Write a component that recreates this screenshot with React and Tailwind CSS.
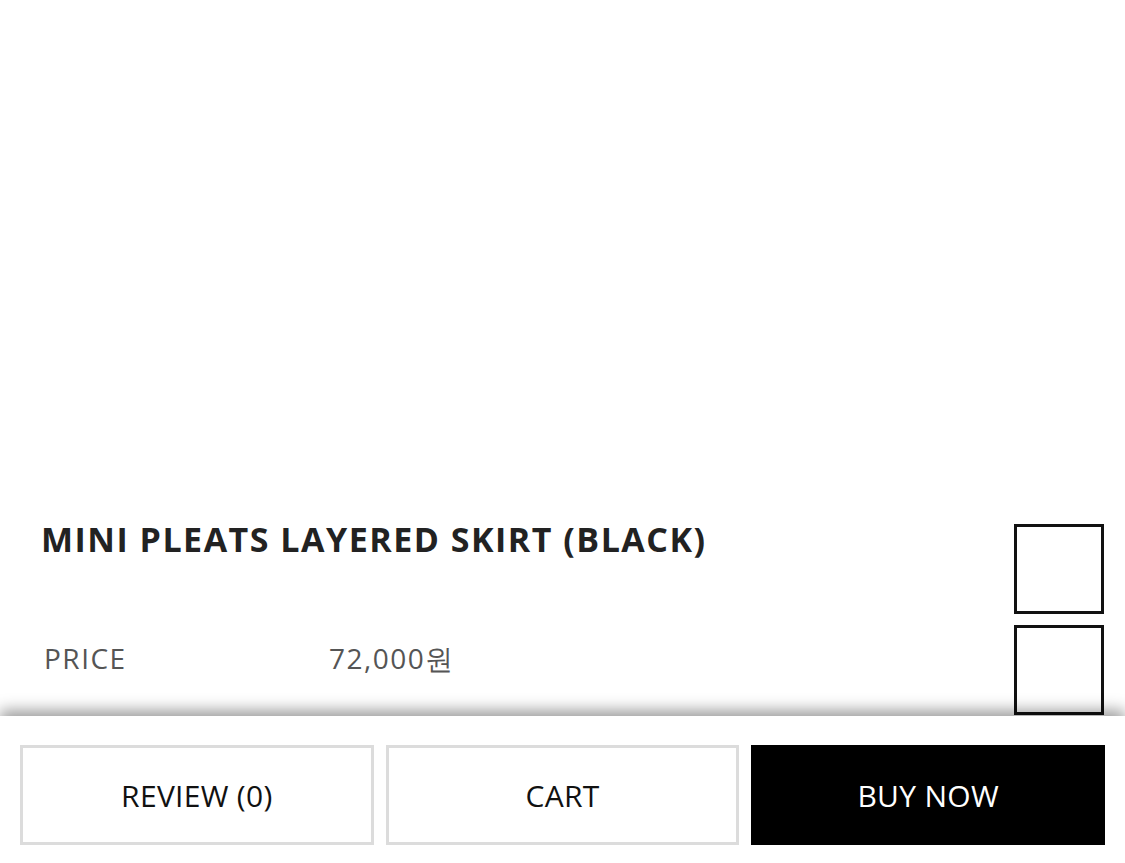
export default function App() {
  return (
    <div className="w-[1125px] h-[863px] bg-white flex flex-col overflow-hidden font-['Open_Sans',sans-serif]">
      {/* product info */}
      <div className="h-[716px] flex items-end justify-between pl-[41px] pr-[21px]">
        <div className="flex flex-col self-start mt-[519px]">
          <h1 className="text-[34px] leading-[40px] font-bold tracking-[1.5px] text-[#222]">
            MINI PLEATS LAYERED SKIRT (BLACK)
          </h1>
          <div className="flex mt-[81px] text-[28px] leading-[36px] text-[#555] tracking-[1.5px]">
            <span className="w-[288px] pl-[3px]">PRICE</span>
            <span>72,000원</span>
          </div>
        </div>
        <div className="flex flex-col gap-[11px] mb-px">
          <div className="w-[90px] h-[90px] border-[3px] border-[#111]"></div>
          <div className="w-[90px] h-[90px] border-[3px] border-[#111]"></div>
        </div>
      </div>

      {/* bottom action bar */}
      <div className="relative z-10 h-[147px] bg-white shadow-[0_-6px_14px_rgba(0,0,0,0.38)] px-5 pt-[29px] grid grid-cols-3 gap-3">
        <button className="h-[100px] border-[3px] border-[#dcdcdc] bg-white text-[30px] tracking-[0.3px] text-[#111]">
          REVIEW (0)
        </button>
        <button className="h-[100px] border-[3px] border-[#dcdcdc] bg-white text-[30px] tracking-[0.3px] text-[#111]">
          CART
        </button>
        <button className="h-[100px] bg-black text-[30px] tracking-[0.3px] text-white">
          BUY NOW
        </button>
      </div>
    </div>
  );
}
